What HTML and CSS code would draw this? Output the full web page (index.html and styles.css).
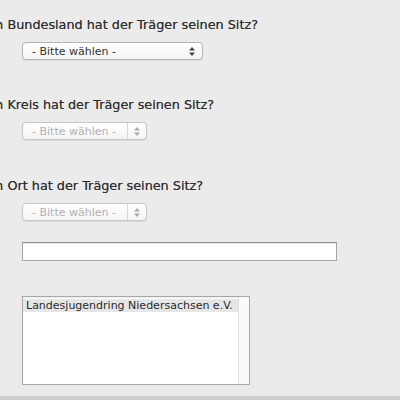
FILE: index.html
```html
<!DOCTYPE html>
<html lang="de">
<head>
    <meta charset="UTF-8">
    <meta name="viewport" content="width=device-width, initial-scale=1.0">
    <title>Träger suchen</title>
    <link rel="stylesheet" href="styles.css">
</head>
<body>
    <div class="form">
        <p class="question q-land">In welchem Bundesland hat der Träger seinen Sitz?</p>
        <div class="select">
            <span class="select-text">- Bitte wählen -</span>
            <span class="arrows">
                <svg width="6" height="9" viewBox="0 0 6 9"><path d="M3 0L6 3.5H0Z M3 9L0 5.5H6Z" fill="#444"/></svg>
            </span>
        </div>

        <p class="question q-kreis">In welchem Kreis hat der Träger seinen Sitz?</p>
        <div class="select small disabled">
            <span class="select-text">- Bitte wählen -</span>
            <span class="arrows">
                <svg width="6" height="9" viewBox="0 0 6 9"><path d="M3 0L6 3.5H0Z M3 9L0 5.5H6Z" fill="#aaa"/></svg>
            </span>
        </div>

        <p class="question q-ort">In welchem Ort hat der Träger seinen Sitz?</p>
        <div class="select small disabled">
            <span class="select-text">- Bitte wählen -</span>
            <span class="arrows">
                <svg width="6" height="9" viewBox="0 0 6 9"><path d="M3 0L6 3.5H0Z M3 9L0 5.5H6Z" fill="#aaa"/></svg>
            </span>
        </div>

        <input type="text" class="search">

        <div class="listbox">
            <div class="options">
                <div class="option selected">Landesjugendring Niedersachsen e.V.</div>
            </div>
            <div class="track"></div>
        </div>
    </div>
    <div class="footer"></div>
</body>
</html>
```

FILE: styles.css
```css
*{
    margin: 0;
    padding: 0;
    box-sizing: border-box;
}
html, body{
    width: 400px;
    height: 400px;
    overflow: hidden;
}
body{
    background-color: #ebebeb;
    font-family: "DejaVu Sans", Verdana, sans-serif;
    color: #2f2f2f;
    display: flex;
    flex-direction: column;
}
.form{
    flex: 1;
    padding: 17px 0 0 22px;
    display: flex;
    flex-direction: column;
    align-items: flex-start;
}
/* questions start with "In welchem", the column is cut on the left */
.question{
    font-size: 12.8px;
    line-height: 16px;
    white-space: nowrap;
    margin-left: -92px;
    text-shadow: 0 0 0.6px rgba(40,40,40,0.7);
}
.q-land{ margin-bottom: 9px; }
.q-kreis{ margin-top: 37px; margin-bottom: 9px; }
.q-ort{ margin-top: 38px; margin-bottom: 9px; }

.select{
    width: 181px;
    height: 18px;
    display: flex;
    align-items: center;
    background: linear-gradient(#ffffff, #f4f4f4);
    border: 1px solid #b4b4b4;
    border-radius: 4px;
    box-shadow: 0 1px 1px rgba(0,0,0,0.08);
    font-size: 11px;
    color: #333;
}
.select-text{
    flex: 1;
    padding-left: 9px;
    white-space: nowrap;
}
.arrows{
    width: 19px;
    height: 100%;
    display: flex;
    align-items: center;
    justify-content: center;
    margin-right: 1px;
}
.small{
    width: 125px;
}
.disabled{
    color: #b2b2b2;
    border-color: #c6c6c6;
}
.disabled .arrows{
    border-left: 1px solid #d6d6d6;
    margin-right: 0;
}

.search{
    margin-top: 21px;
    width: 315px;
    height: 19px;
    border: 1px solid #a4a4a4;
    border-top-color: #8e8e8e;
    background-color: #fff;
    box-shadow: inset 0 1px 1px rgba(0,0,0,0.1);
}

.listbox{
    margin-top: 35px;
    width: 228px;
    height: 89px;
    display: flex;
    border: 1px solid #a8a8a8;
    background-color: #fff;
    box-shadow: inset 0 1px 1px rgba(0,0,0,0.08);
}
.options{
    flex: 1;
    padding-top: 2px;
}
.option{
    font-size: 11px;
    line-height: 13px;
    padding-left: 3px;
    color: #2a2a2a;
    white-space: nowrap;
}
.selected{
    background-color: #e6e6e6;
}
.track{
    width: 11px;
    border-left: 1px solid #e0e0e0;
    background-color: #fafafa;
}

.footer{
    height: 5px;
    margin-top: 11px;
    background-color: #cdcdcd;
}
```
